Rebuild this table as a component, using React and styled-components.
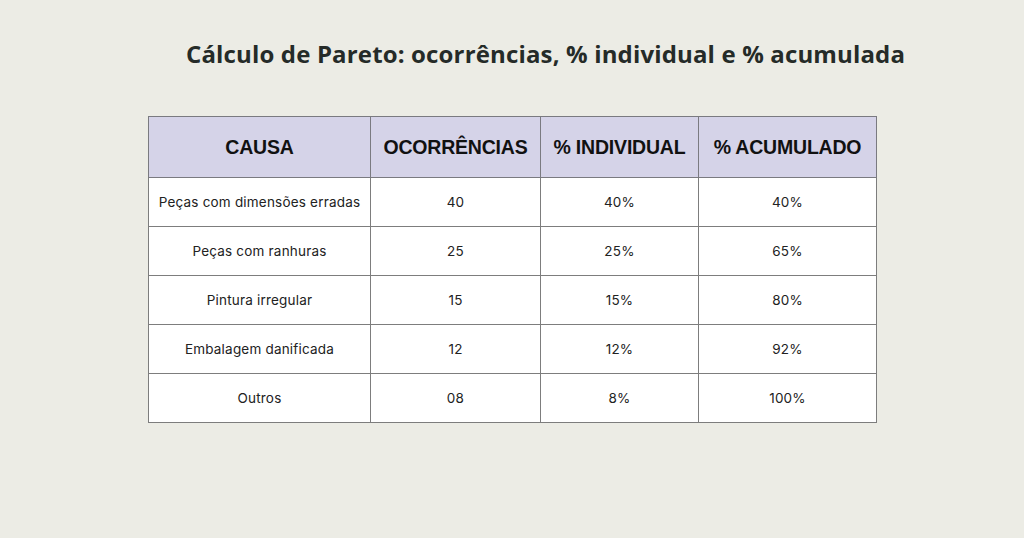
import React from "react";
import styled, { createGlobalStyle } from "styled-components";

const Global = createGlobalStyle`
  html, body { margin: 0; padding: 0; background: #ecece5; }
  body { width: 1024px; height: 538px; overflow: hidden; }
`;

const Page = styled.div`
  width: 1024px;
  height: 538px;
  background: #ecece5;
  display: flex;
  flex-direction: column;
  align-items: flex-start;
`;

const Title = styled.h1`
  margin: 37px 0 0 186px;
  font-family: "Open Sans", sans-serif;
  font-weight: 700;
  font-size: 24px;
  letter-spacing: 0.15px;
  line-height: 34px;
  color: #252b28;
  white-space: nowrap;
`;

const Table = styled.table`
  margin: 45px 0 0 148px;
  border-collapse: collapse;
  table-layout: fixed;
  width: 728px;
  background: #ffffff;
`;

const HeadCell = styled.th`
  height: 60px;
  background: #d5d3e8;
  border: 1px solid #7a7a80;
  font-family: "Liberation Sans", Arial, sans-serif;
  font-weight: 700;
  font-size: 19.5px;
  letter-spacing: -0.2px;
  color: #111;
  text-align: center;
  padding: 0;
  white-space: nowrap;
`;

const Cell = styled.td`
  height: 48px;
  border: 1px solid #7d7d7d;
  font-family: "Inter", sans-serif;
  font-size: 13.5px;
  letter-spacing: 0.2px;
  color: #222;
  text-align: center;
  padding: 0;
  white-space: nowrap;
`;

const widths = [222, 170, 158, 178];
const headers = ["CAUSA", "OCORRÊNCIAS", "% INDIVIDUAL", "% ACUMULADO"];
const rows = [
  ["Peças com dimensões erradas", "40", "40%", "40%"],
  ["Peças com ranhuras", "25", "25%", "65%"],
  ["Pintura irregular", "15", "15%", "80%"],
  ["Embalagem danificada", "12", "12%", "92%"],
  ["Outros", "08", "8%", "100%"],
];

export default function App() {
  return (
    <Page>
      <Global />
      <Title>Cálculo de Pareto: ocorrências, % individual e % acumulada</Title>
      <Table>
        <colgroup>
          {widths.map((w, i) => (
            <col key={i} style={{ width: w }} />
          ))}
        </colgroup>
        <thead>
          <tr>
            {headers.map((h) => (
              <HeadCell key={h}>{h}</HeadCell>
            ))}
          </tr>
        </thead>
        <tbody>
          {rows.map((r) => (
            <tr key={r[0]}>
              {r.map((c, i) => (
                <Cell key={i}>{c}</Cell>
              ))}
            </tr>
          ))}
        </tbody>
      </Table>
    </Page>
  );
}
